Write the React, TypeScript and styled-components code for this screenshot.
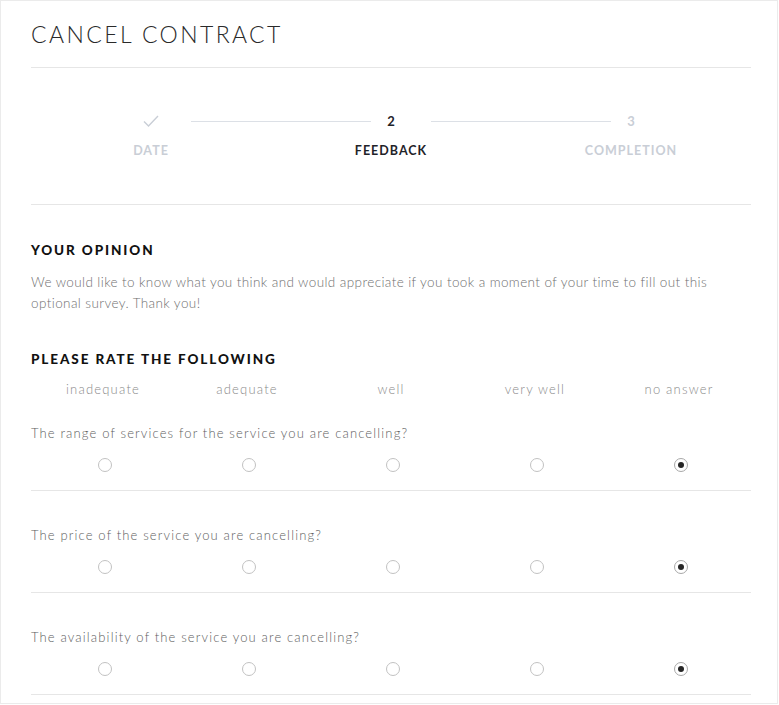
import React, { useState } from 'react';
import styled, { createGlobalStyle } from 'styled-components';

const GlobalStyle = createGlobalStyle`
  body {
    margin: 0;
    background: #ffffff;
    font-family: Lato, "Liberation Sans", sans-serif;
  }
`;

const Page = styled.div`
  box-sizing: border-box;
  width: 778px;
  height: 704px;
  border: 1px solid #ebebeb;
  padding: 0 26px 0 30px;
  overflow: hidden;
`;

const Header = styled.header`
  padding: 20px 0 20px;
  border-bottom: 1px solid #e6e6e6;
`;

const Title = styled.h1`
  margin: 0;
  font-size: 23px;
  line-height: 26px;
  font-weight: 300;
  letter-spacing: 2.4px;
  color: #2a2a2a;
`;

const Stepper = styled.div`
  padding: 43px 0 45px;
  border-bottom: 1px solid #e6e6e6;
`;

const MarkerRow = styled.div`
  display: flex;
  align-items: center;
  height: 20px;
  padding: 0 100px;
`;

const Marker = styled.div<{ $active?: boolean }>`
  width: 40px;
  display: flex;
  justify-content: center;
  align-items: center;
  font-size: 13px;
  font-weight: 700;
  color: ${p => (p.$active ? '#1f2329' : '#c9ced6')};
`;

const Line = styled.div`
  width: 180px;
  height: 1px;
  margin-left: 20px;
  background: #dce0e6;
`;

const LabelRow = styled.div`
  display: grid;
  grid-template-columns: repeat(3, 1fr);
  margin-top: 12px;
`;

const StepLabel = styled.div<{ $active?: boolean }>`
  text-align: center;
  font-size: 12.5px;
  line-height: 16px;
  font-weight: 700;
  letter-spacing: 1px;
  color: ${p => (p.$active ? '#1f2329' : '#c9ced6')};
`;

const Section = styled.section`
  padding-top: 37px;
`;

const Heading = styled.h2<{ $gap?: number }>`
  margin: ${p => p.$gap ?? 0}px 0 0;
  font-size: 13.5px;
  line-height: 16px;
  font-weight: 900;
  letter-spacing: 1.9px;
  color: #111111;
`;

const Intro = styled.p`
  margin: 14px 0 0;
  font-size: 13.5px;
  line-height: 21px;
  font-weight: 300;
  letter-spacing: 0.4px;
  color: #6f6f6f;
`;

const Columns = styled.div`
  display: grid;
  grid-template-columns: repeat(5, 1fr);
  margin-top: 14px;
`;

const ColumnLabel = styled.div`
  text-align: center;
  font-size: 13px;
  line-height: 16px;
  font-weight: 300;
  letter-spacing: 1.2px;
  color: #8a8a8a;
`;

const QuestionList = styled.div`
  padding-top: 27px;
`;

const Question = styled.div<{ $first?: boolean }>`
  padding: ${p => (p.$first ? 0 : 35)}px 0 18px;
  border-bottom: 1px solid #e6e6e6;
`;

const QuestionText = styled.div`
  font-size: 13px;
  line-height: 18px;
  font-weight: 300;
  letter-spacing: 1.15px;
  color: #5e5e5e;
`;

const Options = styled.div`
  display: grid;
  grid-template-columns: repeat(5, 1fr);
  margin: 16px -2px 0 0;
  padding-left: 2px;
  height: 14px;
`;

const OptionCell = styled.label`
  display: flex;
  justify-content: center;
  align-items: center;
  cursor: pointer;
`;

const Radio = styled.span<{ $checked?: boolean }>`
  box-sizing: border-box;
  width: 14px;
  height: 14px;
  border-radius: 50%;
  border: 1px solid ${p => (p.$checked ? '#a8a8a8' : '#c2c2c2')};
  display: flex;
  align-items: center;
  justify-content: center;

  &::after {
    content: '';
    width: 6px;
    height: 6px;
    border-radius: 50%;
    background: ${p => (p.$checked ? '#262626' : 'transparent')};
  }
`;

const ratings = ['inadequate', 'adequate', 'well', 'very well', 'no answer'];

const questions = [
  'The range of services for the service you are cancelling?',
  'The price of the service you are cancelling?',
  'The availability of the service you are cancelling?',
];

const Check = () => (
  <svg width="16" height="12" viewBox="0 0 16 12" fill="none">
    <path d="M1 6.5 L5.5 11 L15 1" stroke="#c9ced6" strokeWidth="1.4" />
  </svg>
);

const App: React.FC = () => {
  const [answers, setAnswers] = useState<number[]>([4, 4, 4]);

  const choose = (q: number, r: number) => {
    setAnswers(answers.map((a, i) => (i === q ? r : a)));
  };

  return (
    <Page>
      <GlobalStyle />
      <Header>
        <Title>CANCEL CONTRACT</Title>
      </Header>

      <Stepper>
        <MarkerRow>
          <Marker><Check /></Marker>
          <Line />
          <Marker $active>2</Marker>
          <Line />
          <Marker>3</Marker>
        </MarkerRow>
        <LabelRow>
          <StepLabel>DATE</StepLabel>
          <StepLabel $active>FEEDBACK</StepLabel>
          <StepLabel>COMPLETION</StepLabel>
        </LabelRow>
      </Stepper>

      <Section>
        <Heading>YOUR OPINION</Heading>
        <Intro>
          We would like to know what you think and would appreciate if you took a moment of your time to fill out this
          optional survey. Thank you!
        </Intro>

        <Heading $gap={37}>PLEASE RATE THE FOLLOWING</Heading>
        <Columns>
          {ratings.map(r => (
            <ColumnLabel key={r}>{r}</ColumnLabel>
          ))}
        </Columns>

        <QuestionList>
          {questions.map((q, qi) => (
            <Question key={q} $first={qi === 0}>
              <QuestionText>{q}</QuestionText>
              <Options>
                {ratings.map((r, ri) => (
                  <OptionCell key={r} onClick={() => choose(qi, ri)}>
                    <Radio $checked={answers[qi] === ri} />
                  </OptionCell>
                ))}
              </Options>
            </Question>
          ))}
        </QuestionList>
      </Section>
    </Page>
  );
};

export default App;
